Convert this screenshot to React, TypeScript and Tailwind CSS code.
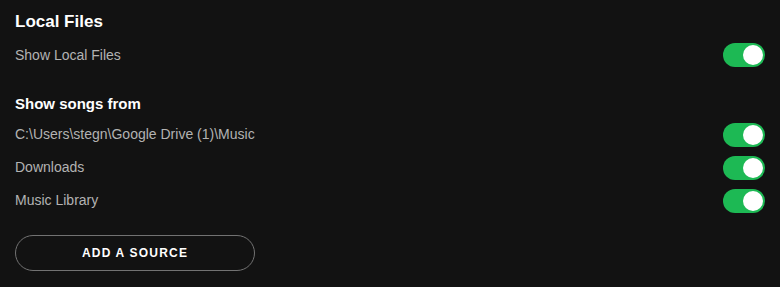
import React, { useState } from 'react';

function Toggle({ on, onChange }: { on: boolean; onChange: () => void }) {
  return (
    <button
      type="button"
      onClick={onChange}
      className={`relative w-[42px] h-6 rounded-full shrink-0 ${on ? 'bg-[#1db954]' : 'bg-[#727272]'}`}
    >
      <span className={`absolute top-[2px] h-5 w-5 rounded-full bg-white ${on ? 'right-[2px]' : 'left-[2px]'}`} />
    </button>
  );
}

function Row({ label, on, onChange, first }: { label: string; on: boolean; onChange: () => void; first?: boolean }) {
  return (
    <div className={`flex items-center justify-between ${first ? 'h-8' : 'h-[33px]'}`}>
      <span className="text-[14px] text-[#b3b3b3]">{label}</span>
      <Toggle on={on} onChange={onChange} />
    </div>
  );
}

export default function App() {
  const [showLocal, setShowLocal] = useState(true);
  const [sources, setSources] = useState([
    { name: 'C:\\Users\\stegn\\Google Drive (1)\\Music', on: true },
    { name: 'Downloads', on: true },
    { name: 'Music Library', on: true },
  ]);

  const flip = (i: number) =>
    setSources(s => s.map((x, j) => (j === i ? { ...x, on: !x.on } : x)));

  return (
    <div className="w-[780px] h-[287px] bg-[#121212] pl-[15px] pr-[15px] pt-[10px] font-['Liberation_Sans',Arial,sans-serif] overflow-hidden">
      <h2 className="h-6 leading-6 text-[17px] font-bold text-white">Local Files</h2>
      <div className="mt-[5px]">
        <Row label="Show Local Files" on={showLocal} onChange={() => setShowLocal(!showLocal)} first />
      </div>

      <h3 className="mt-[21px] h-6 leading-6 text-[15px] font-bold text-white">Show songs from</h3>
      <div className="mt-[2px]">
        {sources.map((s, i) => (
          <Row key={s.name} label={s.name} on={s.on} onChange={() => flip(i)} />
        ))}
      </div>

      <button
        type="button"
        className="mt-[18px] w-[240px] h-9 rounded-full border border-[#727272] text-white text-[12px] font-bold tracking-[0.1em]"
      >
        ADD A SOURCE
      </button>
    </div>
  );
}
